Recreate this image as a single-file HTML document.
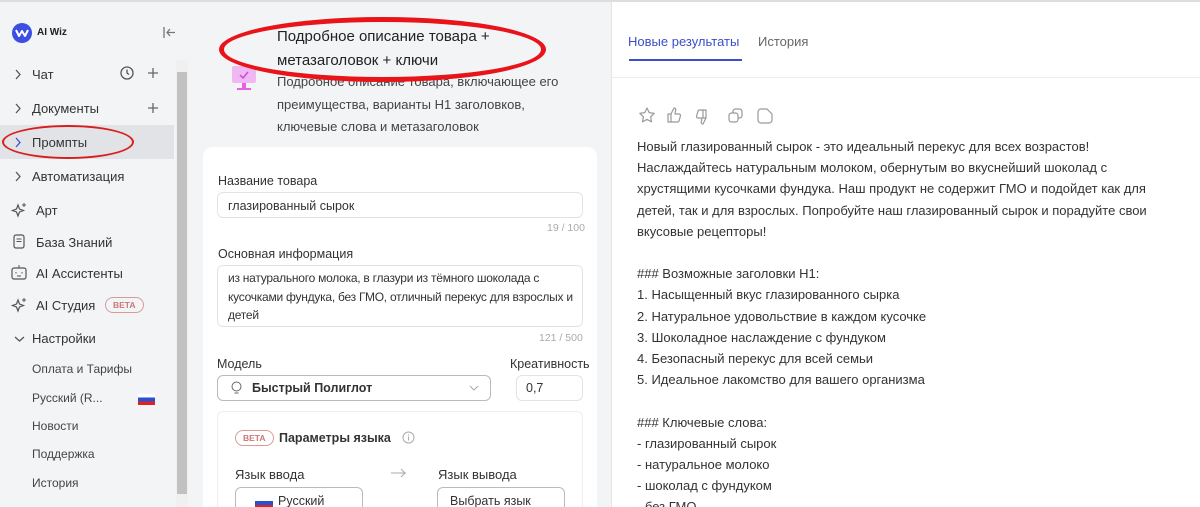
<!DOCTYPE html>
<html><head><meta charset="utf-8"><style>
*{box-sizing:border-box;margin:0;padding:0}
html,body{width:1200px;height:507px;overflow:hidden}
body{font-family:"Liberation Sans","Noto Sans CJK SC",sans-serif;color:#222;background:#fff;position:relative;font-size:13px}
.abs{position:absolute}
.sb{left:0;top:0;width:190px;height:507px;background:#f3f4f6;border-top:2px solid #ddd}
.it{position:absolute;left:32px;font-size:13px;color:#333}
.ch{position:absolute;left:14px}
.sub{position:absolute;left:32px;font-size:12px;color:#444}
.mid{left:190px;top:0;width:422px;height:507px;background:#f3f4f6;border-top:2px solid #ddd;border-right:1px solid #e4e4e4}
.card{left:203px;top:147px;width:394px;height:360px;background:#fff;border-radius:10px 10px 0 0;overflow:hidden}
.lbl{position:absolute;font-size:12.5px;color:#333;white-space:nowrap}
.inp{position:absolute;border:1px solid #e3e3e3;border-radius:6px;background:#fff;font-size:12.5px;color:#333;white-space:nowrap;overflow:hidden}
.cnt{position:absolute;font-size:10.5px;color:#aaa}
.right{left:612px;top:0;width:588px;height:507px;background:#fff;border-top:2px solid #ddd}
.txt{position:absolute;left:637px;top:136px;font-size:13px;line-height:21.2px;color:#333;white-space:nowrap}
.beta{display:inline-block;border:1px solid #d99;color:#c77;border-radius:10px;font-size:8.5px;font-weight:bold;padding:2px 7px}
svg{display:block}
</style></head><body>
<div class="abs sb">
 <div class="abs" style="left:12px;top:21px;width:20px;height:20px;border-radius:50%;background:#3c4fe0"></div>
 <svg class="abs" style="left:15px;top:26px" width="14" height="10"><path d="M1 2l3 6 3-5 3 5 3-6" stroke="#fff" stroke-width="2" fill="none" stroke-linejoin="round"/></svg>
 <div class="abs" style="left:37px;top:25px;font-size:10px;font-weight:bold">AI Wiz</div>
 <svg class="abs" style="left:162px;top:24px" width="14" height="13"><path d="M2 1v11M13 6.5H5M8 3l-3 3.5 3 3.5" stroke="#777" stroke-width="1.3" fill="none"/></svg>
 <div class="abs" style="left:0;top:123px;width:174px;height:34px;background:#e2e3e6"></div>
 <svg class="ch" style="top:67px" width="8" height="11"><path d="M2 1l4 4.5L2 10" stroke="#555" stroke-width="1.3" fill="none"/></svg><span class="it" style="top:65px">Чат</span>
 <svg class="abs" style="left:120px;top:64px" width="14" height="14"><circle cx="7" cy="7" r="6" stroke="#555" stroke-width="1.3" fill="none"/><path d="M7 3.5V7l2 1.5" stroke="#555" stroke-width="1.3" fill="none"/></svg>
 <svg class="abs" style="left:148px;top:66px" width="10" height="10"><path d="M5 0v10M0 5h10" stroke="#666" stroke-width="1.3"/></svg>
 <svg class="ch" style="top:101px" width="8" height="11"><path d="M2 1l4 4.5L2 10" stroke="#555" stroke-width="1.3" fill="none"/></svg><span class="it" style="top:99px">Документы</span>
 <svg class="abs" style="left:148px;top:101px" width="10" height="10"><path d="M5 0v10M0 5h10" stroke="#666" stroke-width="1.3"/></svg>
 <svg class="ch" style="top:135px" width="8" height="11"><path d="M2 1l4 4.5L2 10" stroke="#3b4fd8" stroke-width="1.3" fill="none"/></svg><span class="it" style="top:133px">Промпты</span>
 <div class="abs" style="left:2px;top:123px;width:132px;height:34px;border:2.5px solid #d81f1f;border-radius:50%"></div>
 <svg class="ch" style="top:169px" width="8" height="11"><path d="M2 1l4 4.5L2 10" stroke="#555" stroke-width="1.3" fill="none"/></svg><span class="it" style="top:167px">Автоматизация</span>
 <svg class="abs" style="left:11px;top:199px" width="18" height="18"><path d="M7 4l1.5 4 4 1.5-4 1.5L7 15l-1.5-4-4-1.5 4-1.5z" stroke="#555" stroke-width="1.2" fill="none"/><path d="M13 2v4M11 4h4" stroke="#555" stroke-width="1"/></svg><span class="it" style="left:36px;top:201px">Арт</span>
 <svg class="abs" style="left:13px;top:232px" width="12" height="15"><rect x="1" y="1" width="10" height="13" rx="2" stroke="#555" stroke-width="1.2" fill="none"/><path d="M3.5 5h5M3.5 7.5h5" stroke="#555"/></svg><span class="it" style="left:36px;top:233px">База Знаний</span>
 <svg class="abs" style="left:11px;top:262px" width="16" height="16"><rect x="1" y="4" width="14" height="11" rx="2" stroke="#555" stroke-width="1.2" fill="none"/><path d="M8 1v3M5 8v1.5M11 8v1.5M6 12h4" stroke="#555"/></svg><span class="it" style="left:36px;top:264px">AI Ассистенты</span>
 <svg class="abs" style="left:11px;top:294px" width="18" height="18"><path d="M7 4l1.5 4 4 1.5-4 1.5L7 15l-1.5-4-4-1.5 4-1.5z" stroke="#555" stroke-width="1.2" fill="none"/><path d="M13 2v4M11 4h4" stroke="#555" stroke-width="1"/></svg><span class="it" style="left:36px;top:296px">AI Студия</span>
 <span class="abs beta" style="left:105px;top:295px">BETA</span>
 <svg class="ch" style="top:333px" width="11" height="8"><path d="M1 2l4.5 4L10 2" stroke="#555" stroke-width="1.3" fill="none"/></svg><span class="it" style="top:329px">Настройки</span>
 <span class="sub" style="top:360px">Оплата и Тарифы</span>
 <span class="sub" style="top:389px">Русский (R...</span>
 <div class="abs" style="left:138px;top:392px;width:17px;height:11px;background:linear-gradient(#fff 0 33%,#2a4fd0 33% 66%,#d22 66%)"></div>
 <span class="sub" style="top:417px">Новости</span>
 <span class="sub" style="top:445px">Поддержка</span>
 <span class="sub" style="top:474px">История</span>
 <div class="abs" style="left:176px;top:58px;width:12px;height:449px;background:#f0f0f0"></div>
 <div class="abs" style="left:177px;top:70px;width:10px;height:422px;background:#c1c1c1"></div>
</div>
<div class="abs mid">
 <svg class="abs" style="left:40px;top:62px" width="30" height="28"><rect x="2" y="2" width="24" height="17" rx="2" fill="#f0b8f2"/><path d="M10 11l3 3 5-6" stroke="#d048d8" stroke-width="1.5" fill="none"/><rect x="12" y="19" width="4" height="5" fill="#e860e8"/><rect x="7" y="24" width="14" height="2" fill="#e860e8"/></svg>
 <div class="abs" style="left:87px;top:23px;font-size:15px;line-height:24px;color:#222;white-space:nowrap">Подробное описание товара +<br>метазаголовок + ключи</div>
 <div class="abs" style="left:87px;top:69px;font-size:13px;line-height:22.5px;color:#444;white-space:nowrap">Подробное описание товара, включающее его<br>преимущества, варианты H1 заголовков,<br>ключевые слова и метазаголовок</div>
 <div class="abs" style="left:29px;top:15px;width:327px;height:65px;border:5px solid #e8141a;border-radius:50%"></div>
</div>
<div class="abs card">
 <span class="lbl" style="left:15px;top:27px">Название товара</span>
 <div class="inp" style="left:14px;top:45px;width:366px;height:26px;padding:6px 10px">глазированный сырок</div>
 <span class="cnt" style="left:344px;top:75px">19 / 100</span>
 <span class="lbl" style="left:15px;top:100px">Основная информация</span>
 <div class="inp" style="left:14px;top:118px;width:366px;height:62px;padding:3px 10px;line-height:18.5px;font-size:12px;letter-spacing:-0.25px">из натурального молока, в глазури из тёмного шоколада с<br>кусочками фундука, без ГМО, отличный перекус для взрослых и<br>детей</div>
 <span class="cnt" style="left:336px;top:185px">121 / 500</span>
 <span class="lbl" style="left:14px;top:210px">Модель</span>
 <span class="lbl" style="left:307px;top:210px">Креативность</span>
 <div class="inp" style="left:14px;top:228px;width:274px;height:26px;border-color:#bbb;padding:5px 34px;font-weight:bold;font-size:12.5px">Быстрый Полиглот</div>
 <svg class="abs" style="left:28px;top:234px" width="11" height="15"><circle cx="5.5" cy="5.5" r="4.5" stroke="#666" fill="none"/><path d="M3.5 12h4" stroke="#666"/></svg>
 <svg class="abs" style="left:266px;top:238px" width="10" height="6"><path d="M1 1l4 4 4-4" stroke="#aaa" fill="none"/></svg>
 <div class="inp" style="left:313px;top:228px;width:67px;height:26px;padding:5px 9px">0,7</div>
 <div class="inp" style="left:14px;top:264px;width:366px;height:130px;border-color:#eee"></div>
 <span class="abs beta" style="left:32px;top:283px">BETA</span>
 <span class="abs" style="left:76px;top:284px;font-size:12.5px;font-weight:bold;color:#333;white-space:nowrap">Параметры языка</span>
 <svg class="abs" style="left:199px;top:284px" width="13" height="13"><circle cx="6.5" cy="6.5" r="5.5" stroke="#aaa" fill="none"/><path d="M6.5 5.5v4M6.5 3.5v1" stroke="#aaa"/></svg>
 <span class="lbl" style="left:32px;top:320px;font-size:13px">Язык ввода</span>
 <svg class="abs" style="left:188px;top:321px" width="16" height="10"><path d="M0 5h15M10 1l4 4-4 4" stroke="#aaa" fill="none"/></svg>
 <span class="lbl" style="left:235px;top:320px;font-size:13px">Язык вывода</span>
 <div class="inp" style="left:32px;top:340px;width:128px;height:26px;border-color:#bbb;padding:6px 0 0 42px">Русский</div>
 <div class="abs" style="left:52px;top:350px;width:18px;height:12px;background:linear-gradient(#fff 0 33%,#2a4fd0 33% 66%,#d22 66%)"></div>
 <div class="inp" style="left:234px;top:340px;width:128px;height:26px;border-color:#bbb;padding:6px 12px">Выбрать язык</div>
</div>
<div class="abs right">
 <span class="abs" style="left:16px;top:32px;font-size:13px;color:#3b4fc8">Новые результаты</span>
 <span class="abs" style="left:146px;top:32px;font-size:13px;color:#666">История</span>
 <div class="abs" style="left:17px;top:57px;width:113px;height:2px;background:#3b4fc8"></div>
 <div class="abs" style="left:0;top:75px;width:588px;height:1px;background:#eee"></div>
 <svg class="abs" style="left:26px;top:104px" width="136" height="20" fill="none" stroke="#999" stroke-width="1.2" stroke-linejoin="round">
  <path d="M9 2l2.2 4.6 5 .7-3.6 3.5.9 5L9 13.4l-4.5 2.4.9-5L1.8 7.3l5-.7z"/>
  <path d="M30 8h3v8h-3zM33 8l3-6c1.5 0 2 1 1.7 2.5L37 8h4c1 0 1.7 1 1.4 2l-1.4 5c-.3.8-1 1-1.6 1H33"/>
  <path d="M68 12h-3V4h3zM68 12l-3 6c-1.5 0-2-1-1.7-2.5L64 12h-4c-1 0-1.7-1-1.4-2l1.4-5c.3-.8 1-1 1.6-1H68"/>
  <rect x="91" y="7" width="9" height="9" rx="2.5"/><path d="M95 7V5.5A2.5 2.5 0 0 1 97.5 3h4A2.5 2.5 0 0 1 104 5.5v4a2.5 2.5 0 0 1-2.5 2.5H100"/>
  <path d="M123 3h6l5 5v6a3 3 0 0 1-3 3h-8a3 3 0 0 1-3-3V6a3 3 0 0 1 3-3z"/>
 </svg>
</div>
<div class="txt">Новый глазированный сырок - это идеальный перекус для всех возрастов!<br>Наслаждайтесь натуральным молоком, обернутым во вкуснейший шоколад с<br>хрустящими кусочками фундука. Наш продукт не содержит ГМО и подойдет как для<br>детей, так и для взрослых. Попробуйте наш глазированный сырок и порадуйте свои<br>вкусовые рецепторы!<br><br>### Возможные заголовки H1:<br>1. Насыщенный вкус глазированного сырка<br>2. Натуральное удовольствие в каждом кусочке<br>3. Шоколадное наслаждение с фундуком<br>4. Безопасный перекус для всей семьи<br>5. Идеальное лакомство для вашего организма<br><br>### Ключевые слова:<br>- глазированный сырок<br>- натуральное молоко<br>- шоколад с фундуком<br>- без ГМО</div>
</body></html>
